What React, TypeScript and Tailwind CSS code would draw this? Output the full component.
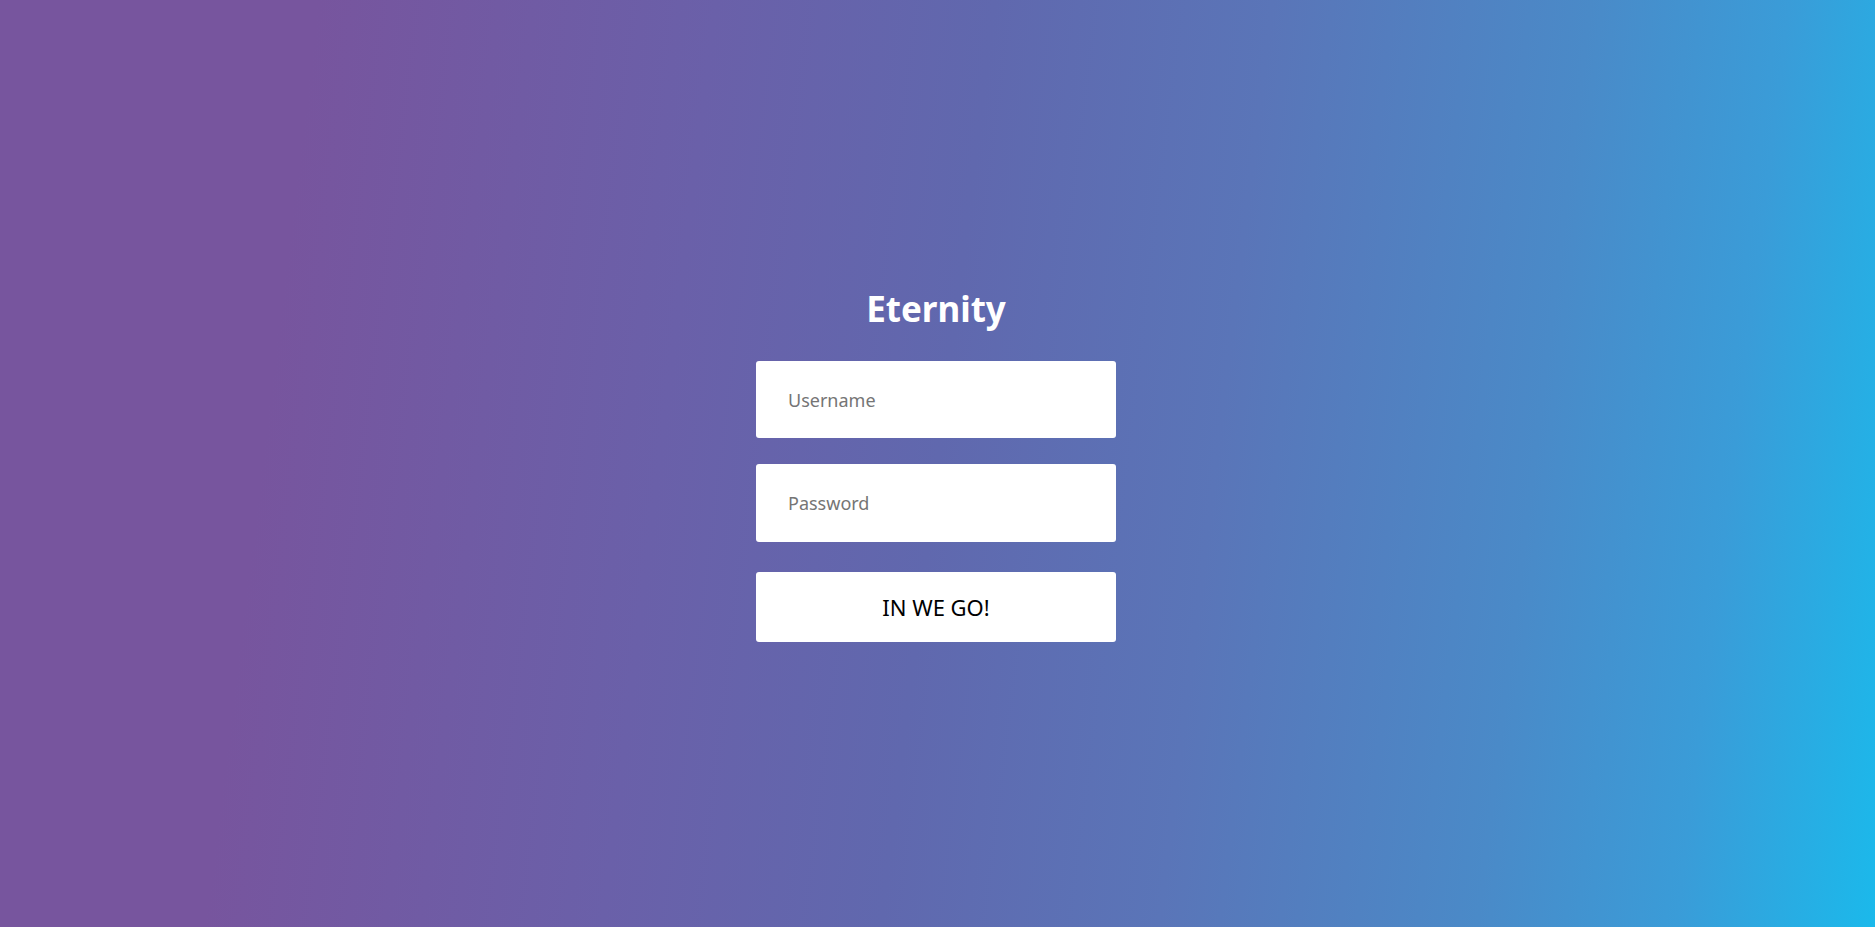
import React from 'react';

export default function App() {
  return (
    <div className="flex h-screen w-full items-center justify-center bg-[linear-gradient(97deg,#77559e_16%,#6a60a9_36%,#6068ae_50%,#5a75b8_64%,#4a8ac8_80%,#3a9cd8_90%,#1bb9eb_100%)] pr-[3px] font-['Noto_Sans',sans-serif]">
      <form className="flex w-[360px] flex-col" onSubmit={(e) => e.preventDefault()}>
        <h1 className="mb-[28px] text-center text-[35px] font-bold leading-[48px] text-white">Eternity</h1>
        <input
          type="text"
          placeholder="Username"
          className="h-[77px] w-full rounded-[3px] bg-white px-[32px] text-[18px] text-gray-800 outline-none placeholder:text-[#757575]"
        />
        <input
          type="password"
          placeholder="Password"
          className="mt-[26px] h-[78px] w-full rounded-[3px] bg-white px-[32px] text-[18px] text-gray-800 outline-none placeholder:text-[#757575]"
        />
        <button
          type="submit"
          className="mt-[30px] h-[70px] w-full rounded-[3px] bg-white text-[22px] text-black"
        >
          IN WE GO!
        </button>
      </form>
    </div>
  );
}
